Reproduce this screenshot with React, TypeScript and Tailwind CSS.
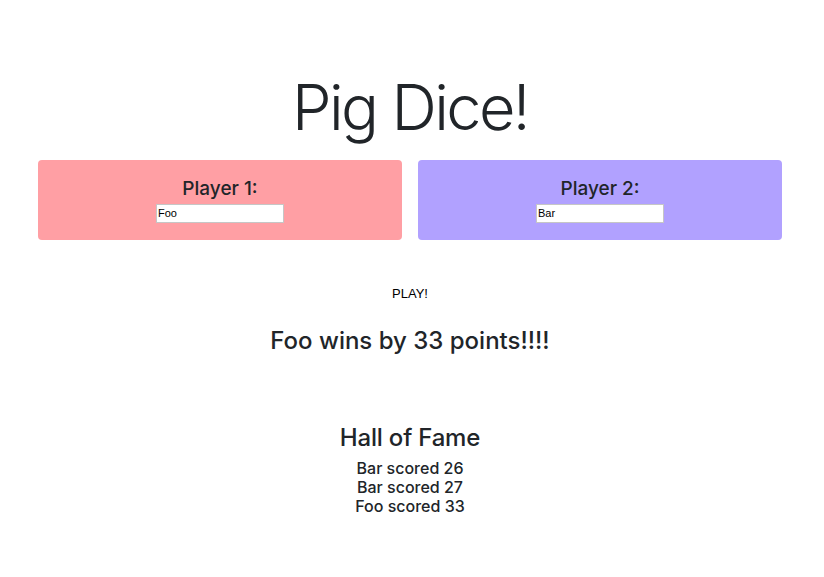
import React from "react";

export default function App() {
  const font = { fontFamily: "Inter, 'Noto Sans', sans-serif" } as React.CSSProperties;
  return (
    <div className="w-[824px] h-[577px] bg-white text-[#212529]" style={font}>
      <div className="ml-[38px] w-[744px] pt-[70px] flex flex-col items-center">
        <h1 className="text-[63px] font-light leading-[1.2] tracking-[-2.6px]">Pig Dice!</h1>
        <div className="mt-[14px] w-full flex gap-4">
          <div className="flex-1 h-[80px] rounded bg-[#ff9fa4] flex flex-col items-center pt-[17px]">
            <div className="text-[19px] font-medium leading-[24px]">Player 1:</div>
            <input
              defaultValue="Foo"
              className="mt-[3px] w-[128px] h-[19px] bg-white border border-[#c6c6c6] px-[1px] text-[11px] text-black outline-none"
              style={{ fontFamily: "'Liberation Sans', Arial, sans-serif" }}
            />
          </div>
          <div className="flex-1 h-[80px] rounded bg-[#b1a1ff] flex flex-col items-center pt-[17px]">
            <div className="text-[19px] font-medium leading-[24px]">Player 2:</div>
            <input
              defaultValue="Bar"
              className="mt-[3px] w-[128px] h-[19px] bg-white border border-[#c6c6c6] px-[1px] text-[11px] text-black outline-none"
              style={{ fontFamily: "'Liberation Sans', Arial, sans-serif" }}
            />
          </div>
        </div>
        <button
          className="mt-[46px] text-[13px] text-black leading-[16px]"
          style={{ fontFamily: "'Liberation Sans', Arial, sans-serif" }}
        >
          PLAY!
        </button>
        <div className="mt-[24px] text-[24px] font-medium leading-[29px] tracking-[0px]">Foo wins by 33 points!!!!</div>
        <div className="mt-[68px] text-[24px] font-medium leading-[29px] tracking-[-0.2px]">Hall of Fame</div>
        <div className="mt-[7px] flex flex-col items-center text-[16px] font-medium leading-[19px]">
          <div>Bar scored 26</div>
          <div>Bar scored 27</div>
          <div>Foo scored 33</div>
        </div>
      </div>
    </div>
  );
}
